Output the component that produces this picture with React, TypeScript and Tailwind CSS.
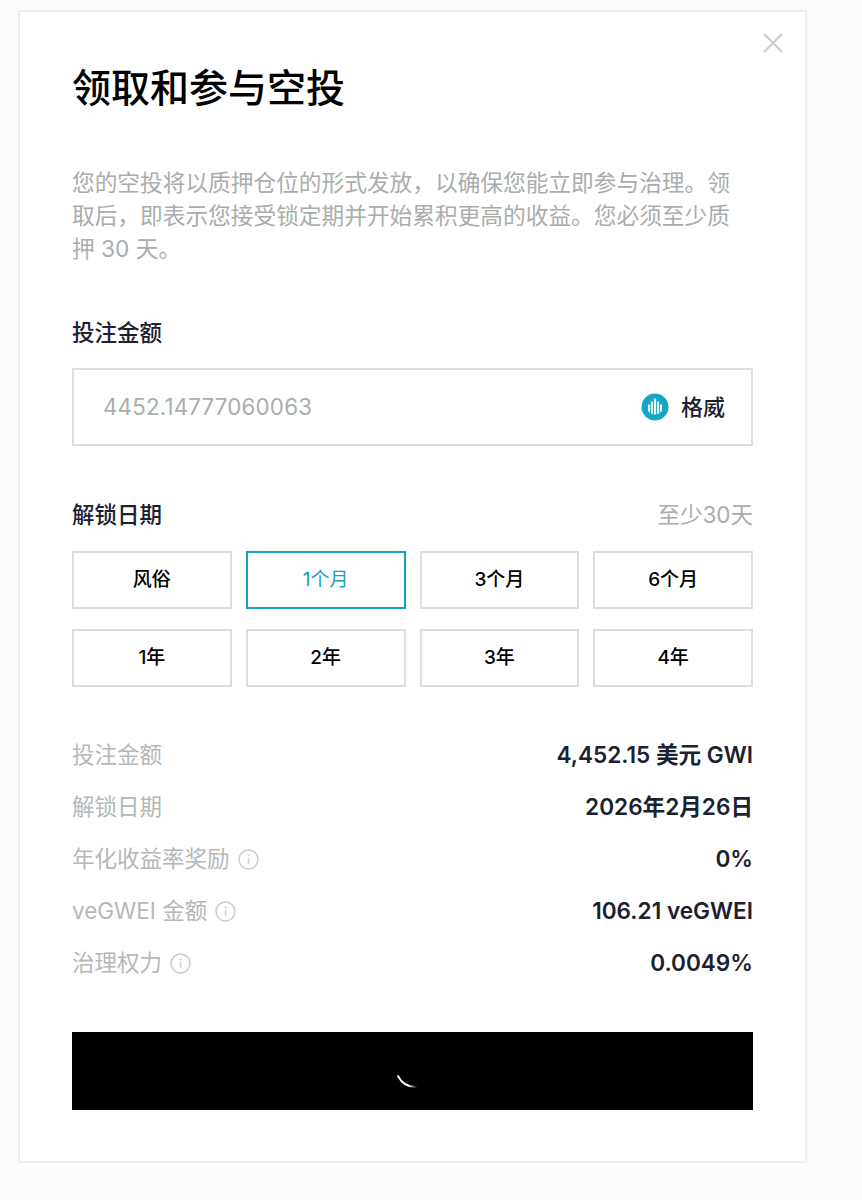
import { X } from 'lucide-react';

const cjk = 'font-["Inter","Noto_Sans_CJK_SC",sans-serif]';

const durations = ['风俗', '1个月', '3个月', '6个月', '1年', '2年', '3年', '4年'];

const InfoIcon = () => (
  <svg width="21" height="21" viewBox="0 0 20 20" fill="none" className="ml-2 text-[#c9cccb]">
    <circle cx="10" cy="10" r="9" stroke="currentColor" strokeWidth="1.4" />
    <path d="M10 9v5" stroke="currentColor" strokeWidth="1.4" />
    <circle cx="10" cy="6.3" r="1" fill="currentColor" />
  </svg>
);

const GwiLogo = () => (
  <svg width="28" height="28" viewBox="0 0 28 28" className="mr-[12px]">
    <circle cx="14" cy="14" r="13.5" fill="#17a6c6" />
    <g fill="#e8f7fa">
      <path d="M7 11.5h2.1v8.3L7 18z" />
      <path d="M9.9 8.5h2.1v12.7l-2.1-.8z" />
      <path d="M12.9 5.5h2.2v16h-2.2z" />
      <path d="M16 8.5h2.1v11.9l-2.1.8z" />
      <path d="M18.9 11.5H21V18l-2.1 1.8z" />
    </g>
  </svg>
);

const rows = [
  { label: '投注金额', value: '4,452.15 美元 GWI' },
  { label: '解锁日期', value: '2026年2月26日' },
  { label: '年化收益率奖励', value: '0%', info: true },
  { label: 'veGWEI 金额', value: '106.21 veGWEI', info: true },
  { label: '治理权力', value: '0.0049%', info: true },
];

export default function App() {
  return (
    <div className={`h-[1200px] bg-[#fbfbfb] pt-[10px] pl-[18px] ${cjk}`}>
      <div className="relative h-[1153px] w-[789px] border-2 border-[#eeeeee] bg-white px-[52px] pt-[50px]">
        <button className="absolute right-[15px] top-[14px] text-[#c9cccb]" aria-label="Close">
          <X size={34} strokeWidth={1.4} />
        </button>

        <h1 className="text-[39px] leading-[52px] font-medium text-black">领取和参与空投</h1>

        <p className="mt-[52px] pr-[4px] text-[22.7px] leading-[33px] text-[#a9adac]">
          您的空投将以质押仓位的形式发放，以确保您能立即参与治理。领取后，即表示您接受锁定期并开始累积更高的收益。您必须至少质押 30 天。
        </p>

        <div className="mt-[52px] text-[22.5px] leading-[32px] font-medium text-[#1c2130]">投注金额</div>

        <div className="mt-[19px] flex h-[78px] items-center justify-between border-2 border-[#dcdedd] pl-[29px] pr-[26px]">
          <span className="text-[22.3px] tracking-[0.2px] text-[#a9adac]">4452.14777060063</span>
          <span className="flex items-center text-[22px] font-medium text-[#1c2130]">
            <GwiLogo />
            格威
          </span>
        </div>

        <div className="mt-[53px] flex items-center justify-between">
          <span className="text-[22.5px] leading-[32px] font-medium text-[#1c2130]">解锁日期</span>
          <span className="text-[22.5px] leading-[32px] text-[#a9adac]">至少30天</span>
        </div>

        <div className="mt-[20px] grid grid-cols-4 gap-x-[14px] gap-y-[20px]">
          {durations.map((d) =>
            d === '1个月' ? (
              <button key={d} className="h-[58px] border-2 border-[#17a0bf] text-[19px] text-[#17a0bf]">
                {d}
              </button>
            ) : (
              <button key={d} className="h-[58px] border-2 border-[#dcdedd] text-[19px] font-medium text-black">
                {d}
              </button>
            ),
          )}
        </div>

        <div className="mt-[52px] flex flex-col gap-[20px]">
          {rows.map((r) => (
            <div key={r.label} className="flex h-[32px] items-center justify-between">
              <span className="flex items-center text-[22.5px] text-[#b4b8b7]">
                {r.label}
                {r.info && <InfoIcon />}
              </span>
              <span className="text-[22.6px] font-semibold text-[#1c2130]">{r.value}</span>
            </div>
          ))}
        </div>

        <button className="mt-[53px] flex h-[78px] w-full items-center justify-center bg-black" aria-label="Loading">
          <svg width="40" height="40" viewBox="0 0 40 40" fill="none" className="translate-y-[1px]">
            <defs>
              <linearGradient id="spin" x1="5" y1="0" x2="23" y2="0" gradientUnits="userSpaceOnUse">
                <stop offset="0.6" stopColor="white" />
                <stop offset="1" stopColor="white" stopOpacity="0.1" />
              </linearGradient>
            </defs>
            <path d="M5 24 C8 30 14 35 23 35" stroke="url(#spin)" strokeWidth="1.8" strokeLinecap="round" />
          </svg>
        </button>
      </div>
    </div>
  );
}
